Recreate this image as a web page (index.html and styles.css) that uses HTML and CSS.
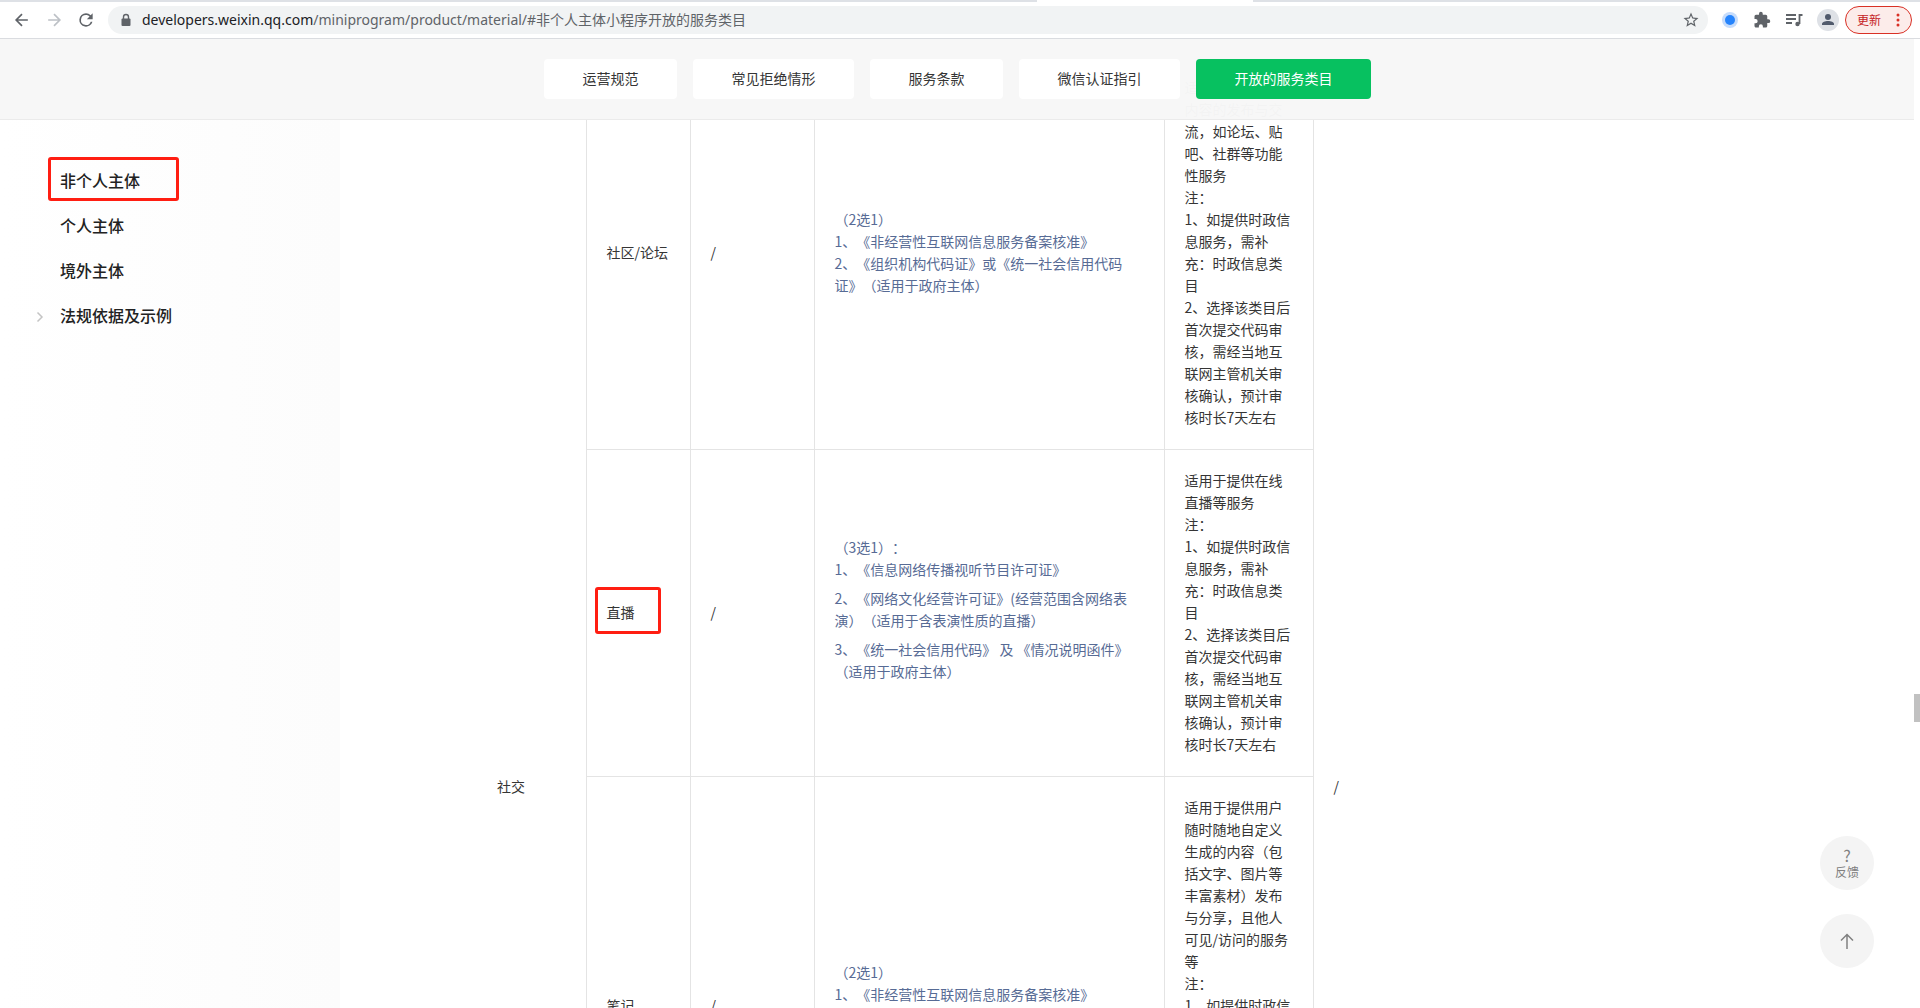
FILE: index.html
```html
<!DOCTYPE html>
<html lang="zh-CN">
<head>
<meta charset="utf-8">
<title>小程序开放的服务类目</title>
<link rel="stylesheet" href="styles.css">
</head>
<body>
<div class="window">
  <div class="tabstrip"><div class="current"></div></div>
  <div class="toolbar">
    <button class="tool" aria-label="后退"><svg width="24" height="24" viewBox="0 0 24 24" fill="none" stroke="#5f6368" stroke-width="2"><path d="M19 12H6M12 5l-7 7 7 7"/></svg></button>
    <button class="tool" aria-label="前进"><svg width="24" height="24" viewBox="0 0 24 24" fill="none" stroke="#bdc1c6" stroke-width="2"><path d="M5 12h13M12 5l7 7-7 7"/></svg></button>
    <button class="tool" aria-label="刷新"><svg width="22" height="22" viewBox="0 0 24 24" fill="#5f6368"><path d="M17.65 6.35A7.96 7.96 0 0 0 12 4a8 8 0 1 0 7.73 10h-2.08A6 6 0 1 1 12 6c1.66 0 3.14.69 4.22 1.78L13 11h7V4z"/></svg></button>
    <div class="address">
      <svg width="14" height="14" viewBox="0 0 14 14"><path d="M4.500 6V4a2.500 2.500 0 0 1 5 0v2" fill="none" stroke="#5f6368" stroke-width="1.400"/><rect x="2.500" y="5.500" width="9" height="7.500" rx="1" fill="#5f6368"/></svg>
      <span class="url"><span class="host">developers.weixin.qq.com</span>/miniprogram/product/material/#非个人主体小程序开放的服务类目</span>
      <button class="star" aria-label="收藏"><svg width="18" height="18" viewBox="0 0 24 24" fill="#5f6368"><path d="M22 9.240l-7.190-.62L12 2 9.190 8.630 2 9.240l5.460 4.730L5.820 21 12 17.270 18.180 21l-1.630-7.030L22 9.240zM12 15.400l-3.760 2.270 1-4.280-3.320-2.880 4.380-.38L12 6.100l1.710 4.040 4.380.38-3.320 2.880 1 4.280L12 15.400z"/></svg></button>
    </div>
    <div class="extensions">
      <button class="ext" aria-label="扩展"><svg width="18" height="18" viewBox="0 0 18 18"><circle cx="9" cy="9" r="8" fill="#c6dcfb"/><circle cx="9" cy="9" r="5" fill="#2684fc"/></svg></button>
      <button class="ext" aria-label="扩展程序"><svg width="18" height="18" viewBox="0 0 24 24" fill="#5f6368"><path d="M20.500 11H19V7a2 2 0 0 0-2-2h-4V3.500a2.500 2.500 0 0 0-5 0V5H4a2 2 0 0 0-2 2v3.800h1.500a2.700 2.700 0 0 1 0 5.400H2V20c0 1.100.9 2 2 2h3.800v-1.500a2.700 2.700 0 0 1 5.400 0V22H17a2 2 0 0 0 2-2v-4h1.500a2.500 2.500 0 0 0 0-5z"/></svg></button>
      <button class="ext" aria-label="媒体"><svg width="18" height="18" viewBox="0 0 18 18" fill="none" stroke="#5f6368" stroke-width="1.800"><path d="M1 4h10M1 8h10M1 12h6M17.500 4H14.500v9"/><circle cx="12.500" cy="13" r="2.200" fill="#5f6368" stroke="none"/></svg></button>
      <button class="ext avatar" aria-label="用户"><svg width="22" height="22" viewBox="0 0 22 22"><circle cx="11" cy="11" r="11" fill="#dee1e6"/><circle cx="11" cy="8" r="3" fill="#505a6c"/><path d="M5 16v-1c0-2 3-3 6-3s6 1 6 3v1z" fill="#505a6c"/></svg></button>
    </div>
    <button class="update">更新<svg width="4" height="14" viewBox="0 0 4 14" fill="#d93025"><circle cx="2" cy="2" r="1.500"/><circle cx="2" cy="7" r="1.500"/><circle cx="2" cy="12" r="1.500"/></svg></button>
  </div>

  <div class="viewport">
    <div class="page">
      <nav class="tabs">
        <a class="tab" href="#">运营规范</a>
        <a class="tab" href="#">常见拒绝情形</a>
        <a class="tab" href="#">服务条款</a>
        <a class="tab" href="#">微信认证指引</a>
        <a class="tab active" href="#">开放的服务类目</a>
      </nav>
      <div class="body">
        <aside class="sidebar">
          <a class="item" href="#"><span class="mark">非个人主体</span></a>
          <a class="item" href="#">个人主体</a>
          <a class="item" href="#">境外主体</a>
          <a class="item" href="#"><svg class="chevron" width="8" height="12" viewBox="0 0 8 12" fill="none" stroke="#c4c4c4" stroke-width="1.500"><path d="M1.500 1.500L6 6l-4.500 4.500"/></svg>法规依据及示例</a>
        </aside>
        <main class="content">
          <table class="categories">
            <colgroup><col class="c-group"><col class="c-name"><col class="c-sub"><col class="c-docs"><col class="c-scope"><col class="c-note"></colgroup>
            <tbody>
            <tr>
              <td class="plain" rowspan="4">社交</td>
              <td>社区/论坛</td>
              <td>/</td>
              <td class="docs"><a href="#">（2选1）</a><br><a href="#">1、《非经营性互联网信息服务备案核准》</a><br><a href="#">2、《组织机构代码证》或《统一社会信用代码<br>证》（适用于政府主体）</a></td>
              <td>适用于提供网络<br>内容的发布与交<br>流，如论坛、贴<br>吧、社群等功能<br>性服务<br>注：<br>1、如提供时政信<br>息服务，需补<br>充：时政信息类<br>目<br>2、选择该类目后<br>首次提交代码审<br>核，需经当地互<br>联网主管机关审<br>核确认，预计审<br>核时长7天左右</td>
              <td class="plain" rowspan="4">/</td>
            </tr>
            <tr>
              <td><span class="mark">直播</span></td>
              <td>/</td>
              <td class="docs"><p><a href="#">（3选1）：</a><br><a href="#">1、《信息网络传播视听节目许可证》</a></p><p><a href="#">2、《网络文化经营许可证》(经营范围含网络表<br>演）（适用于含表演性质的直播）</a></p><p><a href="#">3、《统一社会信用代码》 及 《情况说明函件》<br>（适用于政府主体）</a></p></td>
              <td>适用于提供在线<br>直播等服务<br>注：<br>1、如提供时政信<br>息服务，需补<br>充：时政信息类<br>目<br>2、选择该类目后<br>首次提交代码审<br>核，需经当地互<br>联网主管机关审<br>核确认，预计审<br>核时长7天左右</td>
            </tr>
            <tr>
              <td>笔记</td>
              <td>/</td>
              <td class="docs"><a href="#">（2选1）</a><br><a href="#">1、《非经营性互联网信息服务备案核准》</a><br><a href="#">2、《组织机构代码证》或《统一社会信用代码<br>证》（适用于政府主体）</a></td>
              <td>适用于提供用户<br>随时随地自定义<br>生成的内容（包<br>括文字、图片等<br>丰富素材）发布<br>与分享，且他人<br>可见/访问的服务<br>等<br>注：<br>1、如提供时政信<br>息服务，需补<br>充：时政信息类<br>目<br>2、选择该类目后<br>首次提交代码审<br>核，需经当地互<br>联网主管机关审<br>核确认，预计审<br>核时长7天左右</td>
            </tr>
            <tr class="next"><td></td><td></td><td></td><td></td></tr>
            </tbody>
          </table>
        </main>
      </div>
      <div class="floating">
        <button class="round"><span class="ask">?</span>反馈</button>
        <button class="round" aria-label="返回顶部"><svg width="14" height="16" viewBox="0 0 14 16" fill="none" stroke="#808080" stroke-width="1.500"><path d="M7 16V1.500M1 7.500l6-6 6 6"/></svg></button>
      </div>
    </div>
    <div class="scrollbar"><div class="thumb"></div></div>
  </div>
</div>
</body>
</html>
```
FILE: styles.css
```css
* { box-sizing: border-box; }
body {
  margin: 0;
  font: 14px/22px "Noto Sans CJK SC", "Noto Sans", sans-serif;
  color: #353535;
  text-spacing-trim: space-all;
}
a { color: inherit; text-decoration: none; }
button { border: 0; padding: 0; background: none; font: inherit; color: inherit; display: flex; align-items: center; justify-content: center; }
p { margin: 0; }

.window { display: flex; flex-direction: column; height: 100vh; overflow: hidden; background: #fff; }

/* browser tab strip and toolbar */
.tabstrip { flex: none; height: 2px; padding-left: 54%; background: #dee1e6; }
.current { width: 216px; height: 2px; background: #fff; }
.toolbar { display: flex; align-items: center; height: 37px; flex: none; padding: 0 8px 0 6px; border-bottom: 1px solid #dadce0; }
.tool { width: 32px; height: 32px; }
.tool svg { width: 20px; height: 20px; }
.address { flex: 1; display: flex; align-items: center; height: 28px; margin-left: 6px; padding: 0 8px 0 11px; border-radius: 14px; background: #f1f3f4; }
.url { flex: 1; margin-left: 9px; font-family: "Noto Sans", "Noto Sans CJK SC", sans-serif; color: #5f6368; white-space: nowrap; }
.host { color: #202124; }
.extensions { display: flex; align-items: center; gap: 14px; margin: 0 6px 0 13px; }
.ext { width: 18px; height: 22px; }
.avatar { width: 22px; }
.update { gap: 15px; width: 67px; height: 28px; border: 1px solid #d93025; border-radius: 14px; background: #fcecea; color: #c5221f; font-size: 12px; }

/* page area and its scrollbar */
.viewport { display: flex; flex: 1; min-height: 0; }
.page { position: relative; display: flex; flex-direction: column; flex: 1; min-width: 0; }
.scrollbar { flex: none; width: 6px; padding-top: 655px; }
.thumb { height: 28px; background: #c1c1c1; }

.tabs { position: relative; z-index: 1; display: flex; justify-content: center; align-items: center; gap: 16px; flex: none; height: 81px; background: rgba(247, 247, 247, 0.980); border-bottom: 1px solid #ebebeb; }
.tab { height: 40px; padding: 0 38px 0 39px; border-radius: 4px; background: #fff; line-height: 38px; }
.tab.active { background: #07c160; color: #fff; }

.body { display: flex; flex: 1; min-height: 0; }
.sidebar { flex: none; width: 340px; padding: 38px 0 0 60px; background: linear-gradient(to right, #fff, #fcfcfc); }
.item { position: relative; display: block; height: 45px; font-size: 16px; font-weight: 500; line-height: 45px; color: #222; }
.chevron { position: absolute; left: -24px; top: 18px; }
.content { flex: 1; min-width: 0; padding-left: 137px; }

/* red highlight frames around a label */
.mark { position: relative; }
.mark::after { content: ""; position: absolute; border: 3px solid #ff1e12; border-radius: 3px; }
.sidebar .mark::after { inset: -11px -39px -9px -12px; }
.categories .mark::after { inset: -15px -26px -12px -12px; }

/* the table is scrolled up behind the tab bar */
.categories { width: 973px; margin-top: -64px; table-layout: fixed; border-collapse: collapse; }
.c-group { width: 109px; }
.c-name { width: 104px; }
.c-sub { width: 124px; }
.c-docs { width: 350px; }
.c-scope { width: 149px; }
.c-note { width: 137px; }
.categories td { padding: 19px 20px 21px; border: 1px solid #e4e4e4; white-space: nowrap; vertical-align: middle; }
.categories .plain { border-top: 0; border-bottom: 0; }
.categories .plain:first-child { border-left: 0; }
.categories .plain:last-child { border-right: 0; }
.docs { color: #576b95; }
.docs p { margin-bottom: 7px; }
.next { height: 281px; }

.floating { position: absolute; right: 40px; bottom: 40px; display: flex; flex-direction: column; gap: 24px; }
.round { flex-direction: column; width: 54px; height: 54px; border-radius: 50%; background: #f4f4f4; color: #808080; font-size: 12px; line-height: 16px; }
.ask { font-size: 16px; line-height: 18px; }
```
